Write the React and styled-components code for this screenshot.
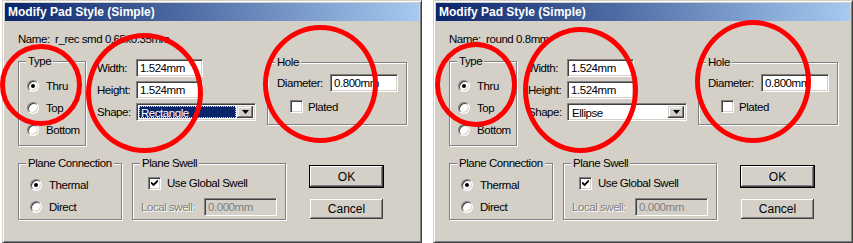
import React from "react";
import styled, { createGlobalStyle } from "styled-components";

const GlobalStyle = createGlobalStyle`
  html, body {
    margin: 0;
    padding: 0;
    background: #fff;
  }
  body {
    font-family: "Liberation Sans", Arial, sans-serif;
    font-size: 11.5px;
    color: #000;
  }
`;

const Page = styled.div`
  display: flex;
  gap: 11px;
  padding-left: 2px;
  width: 853px;
  height: 243px;
  overflow: hidden;
  box-sizing: border-box;
`;

const Frame = styled.div`
  position: relative;
  flex: none;
  width: 420px;
  height: 243px;
  box-sizing: border-box;
  background: #d4d0c8;
  border: 1px solid;
  border-color: #d4d0c8 #404040 #404040 #d4d0c8;
  box-shadow: inset 1px 1px 0 #fff, inset -1px -1px 0 #808080;
  padding: 2px;
  display: flex;
  flex-direction: column;
`;

const TitleBar = styled.div`
  height: 18px;
  line-height: 18px;
  padding-left: 3px;
  background: linear-gradient(to right, #0a246a, #a6caf0);
  color: #fff;
  font-weight: bold;
  font-size: 12px;
  white-space: nowrap;
`;

const Body = styled.div`
  padding: 12px 0 0 13px;
  letter-spacing: -0.45px;
`;

const NameLine = styled.div`
  line-height: 13px;
  height: 13px;
  white-space: pre;
`;

const Row = styled.div`
  display: flex;
  align-items: flex-start;
  margin-top: ${(p) => p.$top}px;
`;

const Group = styled.div`
  position: relative;
  flex: none;
  box-sizing: border-box;
  width: ${(p) => p.$w}px;
  height: ${(p) => p.$h}px;
  margin-top: ${(p) => p.$mt || 0}px;
  margin-left: ${(p) => p.$ml || 0}px;
  border: 1px solid #808080;
  box-shadow: inset 1px 1px 0 #fff, 1px 1px 0 #fff;
  padding: ${(p) => p.$pad};
`;

const Legend = styled.span`
  position: absolute;
  top: -7px;
  left: 7px;
  padding: 0 2px;
  line-height: 13px;
  background: #d4d0c8;
  white-space: nowrap;
`;

const OptionRow = styled.label`
  display: flex;
  align-items: center;
  gap: 7px;
  height: 22px;
  white-space: nowrap;
`;

const RadioDot = styled.span`
  position: relative;
  flex: none;
  width: 12px;
  height: 12px;
  box-sizing: border-box;
  border-radius: 50%;
  background: #fff;
  border: 1px solid;
  border-color: #808080 #fff #fff #808080;
  box-shadow: inset 1px 1px 0 #404040, inset -1px -1px 0 #d4d0c8;

  &::after {
    content: "";
    display: ${(p) => (p.$on ? "block" : "none")};
    position: absolute;
    left: 3px;
    top: 3px;
    width: 4px;
    height: 4px;
    border-radius: 50%;
    background: #000;
  }
`;

const CheckBox = styled.span`
  flex: none;
  width: 13px;
  height: 13px;
  box-sizing: border-box;
  background: #fff;
  border: 1px solid;
  border-color: #808080 #fff #fff #808080;
  box-shadow: inset 1px 1px 0 #404040, inset -1px -1px 0 #d4d0c8;
  display: flex;
  align-items: center;
  justify-content: center;
`;

const Fields = styled.div`
  display: grid;
  grid-template-columns: 39px auto;
  grid-auto-rows: 18px;
  row-gap: 4px;
  align-items: center;
  margin-top: 3px;
  margin-left: 11px;
`;

const Sunken = styled.div`
  box-sizing: border-box;
  width: ${(p) => p.$w}px;
  height: 18px;
  background: ${(p) => (p.$disabled ? "#d4d0c8" : "#fff")};
  color: ${(p) => (p.$disabled ? "#808080" : "#000")};
  border: 1px solid;
  border-color: #808080 #fff #fff #808080;
  box-shadow: inset 1px 1px 0 #404040, inset -1px -1px 0 #d4d0c8;
  padding-left: 3px;
  line-height: 16px;
  white-space: nowrap;
  overflow: hidden;
`;

const ComboBox = styled(Sunken)`
  display: flex;
  align-items: stretch;
  padding: 2px;
`;

const ComboValue = styled.div`
  flex: 1;
  box-sizing: border-box;
  line-height: 14px;
  padding-left: 2px;
  margin-right: 1px;
  background: ${(p) => (p.$focus ? "#0a246a" : "transparent")};
  color: ${(p) => (p.$focus ? "#fff" : "#000")};
  outline: ${(p) => (p.$focus ? "1px dotted #e8e070" : "none")};
  outline-offset: -1px;
`;

const ArrowButton = styled.div`
  flex: none;
  width: 16px;
  box-sizing: border-box;
  background: #d4d0c8;
  box-shadow: inset -1px -1px 0 #404040, inset 1px 1px 0 #d4d0c8,
    inset -2px -2px 0 #808080, inset 2px 2px 0 #fff;
  display: flex;
  align-items: center;
  justify-content: center;
`;

const Label = styled.span`
  flex: none;
  width: ${(p) => (p.$w ? `${p.$w}px` : "auto")};
  white-space: nowrap;
  color: ${(p) => (p.$disabled ? "#808080" : "#000")};
  text-shadow: ${(p) => (p.$disabled ? "1px 1px 0 #fff" : "none")};
`;

const LineRow = styled.div`
  display: flex;
  align-items: center;
  height: ${(p) => p.$h || 18}px;
  margin-top: ${(p) => p.$mt || 0}px;
  margin-left: ${(p) => p.$ml || 0}px;
  gap: ${(p) => p.$gap || 0}px;
`;

const Buttons = styled.div`
  display: flex;
  flex-direction: column;
  gap: 10px;
  margin: 2px 0 0 23px;
`;

const Button = styled.div`
  width: 75px;
  height: ${(p) => (p.$default ? 23 : 22)}px;
  box-sizing: border-box;
  background: #d4d0c8;
  border: 1px solid ${(p) => (p.$default ? "#000" : "transparent")};
  box-shadow: inset -1px -1px 0 #404040, inset 1px 1px 0 #fff,
    inset -2px -2px 0 #808080;
  display: flex;
  align-items: center;
  justify-content: center;
  font-size: 12px;
  letter-spacing: 0;
`;

const Ring = styled.div`
  position: absolute;
  left: ${(p) => p.$x}px;
  top: ${(p) => p.$y}px;
  width: ${(p) => p.$w}px;
  height: ${(p) => p.$h}px;
  box-sizing: border-box;
  border: 5px solid #f00;
  border-radius: 50%;
  pointer-events: none;
`;

function Radio({ on, children }) {
  return (
    <OptionRow>
      <RadioDot $on={on} />
      <span>{children}</span>
    </OptionRow>
  );
}

function Check({ on }) {
  return (
    <CheckBox>
      {on && (
        <svg width="7" height="7" viewBox="0 0 7 7">
          <path d="M0 2.5 L2.5 5 L7 0.5" fill="none" stroke="#000" strokeWidth="1.8" />
        </svg>
      )}
    </CheckBox>
  );
}

function DownArrow() {
  return (
    <svg width="7" height="4" viewBox="0 0 7 4">
      <path d="M0 0 H7 L3.5 4 Z" fill="#000" />
    </svg>
  );
}

function PadDialog({ name, shape, focused, rings }) {
  return (
    <Frame>
      <TitleBar>Modify Pad Style (Simple)</TitleBar>
      <Body>
        <NameLine>{`Name:  ${name}`}</NameLine>

        <Row $top={10}>
          <Group $w={68} $h={85} $mt={5} $pad="13px 0 0 8px">
            <Legend>Type</Legend>
            <Radio on>Thru</Radio>
            <Radio>Top</Radio>
            <Radio>Bottom</Radio>
          </Group>

          <Fields>
            <Label>Width:</Label>
            <Sunken $w={67}>1.524mm</Sunken>
            <Label>Height:</Label>
            <Sunken $w={67}>1.524mm</Sunken>
            <Label>Shape:</Label>
            <ComboBox $w={120}>
              <ComboValue $focus={focused}>{shape}</ComboValue>
              <ArrowButton>
                <DownArrow />
              </ArrowButton>
            </ComboBox>
          </Fields>

          <Group $w={140} $h={63} $mt={6} $ml={11} $pad="11px 0 0 9px">
            <Legend>Hole</Legend>
            <LineRow>
              <Label $w={53}>Diameter:</Label>
              <Sunken $w={68}>0.800mm</Sunken>
            </LineRow>
            <LineRow $mt={7} $ml={13} $gap={5} $h={15}>
              <Check />
              <Label>Plated</Label>
            </LineRow>
          </Group>
        </Row>

        <Row $top={17}>
          <Group $w={104} $h={57} $pad="10px 0 0 11px">
            <Legend>Plane Connection</Legend>
            <Radio on>Thermal</Radio>
            <Radio>Direct</Radio>
          </Group>

          <Group $w={154} $h={57} $ml={10} $pad="9px 0 0 8px">
            <Legend>Plane Swell</Legend>
            <LineRow $ml={7} $gap={6} $h={20}>
              <Check on />
              <Label>Use Global Swell</Label>
            </LineRow>
            <LineRow $mt={5}>
              <Label $w={63} $disabled>
                Local swell:
              </Label>
              <Sunken $w={73} $disabled>
                0.000mm
              </Sunken>
            </LineRow>
          </Group>

          <Buttons>
            <Button $default>OK</Button>
            <Button>Cancel</Button>
          </Buttons>
        </Row>
      </Body>

      {rings.map((r, i) => (
        <Ring key={i} $x={r[0]} $y={r[1]} $w={r[2]} $h={r[3]} />
      ))}
    </Frame>
  );
}

const leftRings = [
  [-3, 43, 82, 82],
  [83, 32, 117, 120],
  [260, 24, 115, 118],
];

const rightRings = [
  [1, 41, 82, 85],
  [89, 26, 115, 126],
  [261, 19, 116, 123],
];

export default function App() {
  return (
    <>
      <GlobalStyle />
      <Page>
        <PadDialog
          name="r_rec smd 0.65x0.35mm"
          shape="Rectangle"
          focused
          rings={leftRings}
        />
        <PadDialog name="round 0.8mm" shape="Ellipse" rings={rightRings} />
      </Page>
    </>
  );
}
